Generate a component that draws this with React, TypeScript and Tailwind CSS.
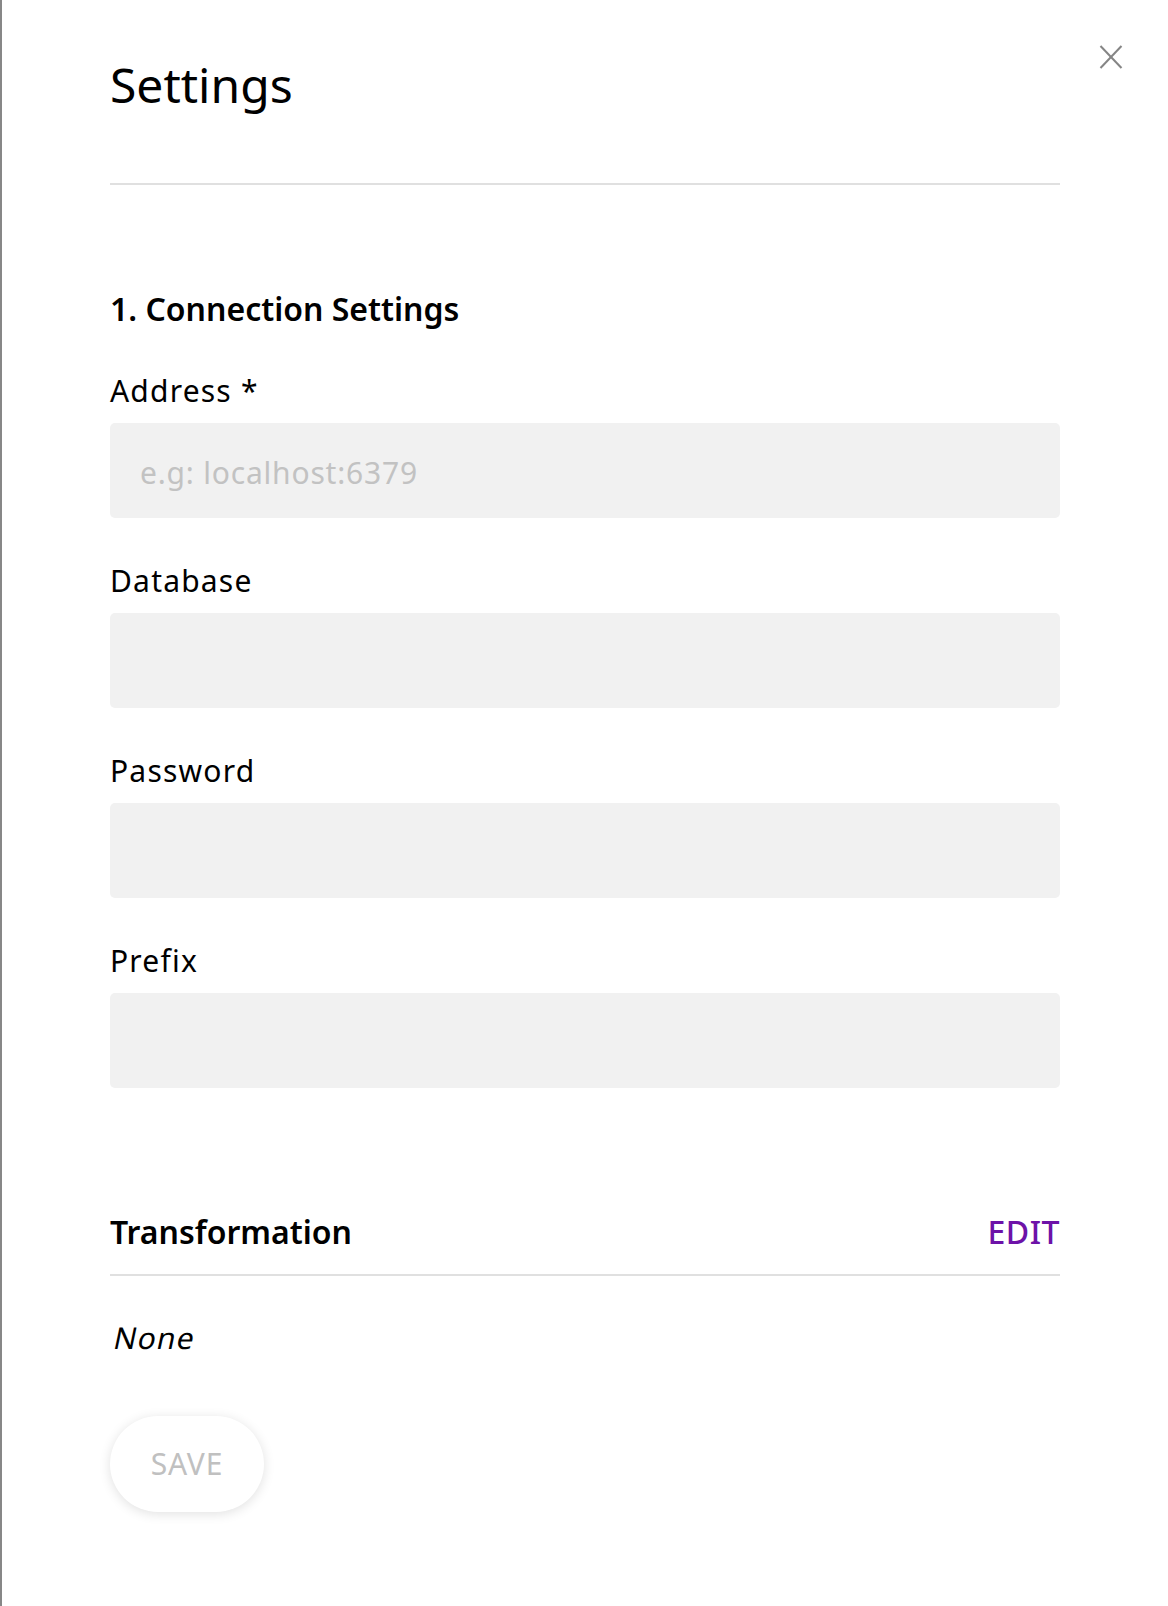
import React from "react";

function Field({ label, placeholder, type = "text" }: { label: string; placeholder?: string; type?: string }) {
  return (
    <div className="mt-[43px] first:mt-[40px]">
      <label className="block text-[30px] leading-[40px] tracking-[1.2px] text-black">{label}</label>
      <input
        type={type}
        placeholder={placeholder}
        className="mt-[12px] block h-[95px] w-full rounded-[5px] bg-[#f1f1f1] px-[30px] pt-[3px] text-[30px] leading-[40px] tracking-[0.8px] text-black outline-none placeholder:text-[#c2c2c2]"
      />
    </div>
  );
}

export default function App() {
  return (
    <div className="relative min-h-[1606px] w-full border-l-2 border-[#878787] bg-white font-['Noto_Sans',sans-serif] text-black">
      <button className="absolute right-[45px] top-[45px] h-[24px] w-[24px]" aria-label="Close">
        <svg viewBox="0 0 24 24" width="24" height="24" fill="none" stroke="#858585" strokeWidth="2" strokeLinecap="butt">
          <line x1="1.5" y1="1" x2="22.5" y2="23" />
          <line x1="22.5" y1="1" x2="1.5" y2="23" />
        </svg>
      </button>
      <div className="ml-[108px] w-[950px] pt-[53px]">
        <h1 className="text-[48px] font-normal leading-[64px]">Settings</h1>
        <div className="mt-[66px] h-[2px] bg-[#e0e0e0]" />
        <h2 className="mt-[102px] text-[32px] font-semibold leading-[44px]">1. Connection Settings</h2>
        <div>
          <Field label="Address *" placeholder="e.g: localhost:6379" />
          <Field label="Database" />
          <Field label="Password" type="password" />
          <Field label="Prefix" />
        </div>
        <div className="mt-[122px] flex items-center justify-between">
          <h2 className="text-[32px] font-semibold leading-[44px]">Transformation</h2>
          <button className="text-[32px] font-medium leading-[44px] tracking-[0.5px] text-[#6d12a8]">EDIT</button>
        </div>
        <div className="mt-[20px] h-[2px] bg-[#e0e0e0]" />
        <p className="mt-[42px] text-[30px] leading-[40px]">
          <span className="inline-block origin-bottom-left -skew-x-12 tracking-[1.2px]">None</span>
        </p>
        <button
          disabled
          className="mt-[58px] flex h-[96px] w-[154px] items-center justify-center rounded-full bg-white text-[30px] leading-[40px] tracking-[0.8px] text-[#c0c0c0] shadow-[0_2px_12px_rgba(0,0,0,0.12)]"
        >
          SAVE
        </button>
      </div>
    </div>
  );
}
